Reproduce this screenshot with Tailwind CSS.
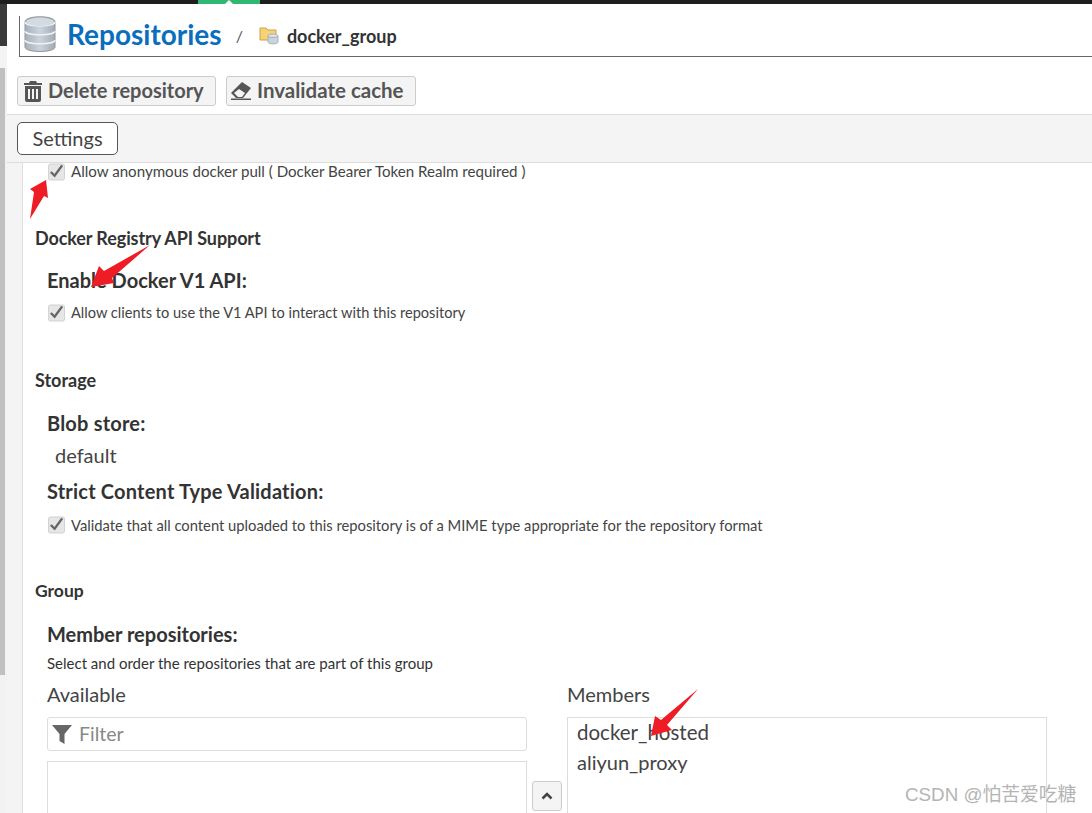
<!DOCTYPE html>
<html><head><meta charset="utf-8"><script src="https://cdn.jsdelivr.net/npm/@tailwindcss/browser@4"></script></head>
<body class="relative h-[813px] w-[1092px] overflow-hidden bg-white font-['Lato','Liberation_Sans',sans-serif] text-[#333]">
<div class="h-[4px] bg-[#1e1e1e] flex"><div class="ml-[198px] w-[62px] bg-[#2eb872] flex justify-center items-end"><div class="w-[8px] h-[4px] bg-white [clip-path:polygon(50%_0,100%_100%,0_100%)]"></div></div></div>
<div class="flex h-[809px]">
  <div class="w-[7px] flex flex-col bg-[#f2f2f2]">
    <div class="h-[42px] bg-[#3a3a3a]"></div>
    <div class="h-[22px] bg-[#f4f4f4]"></div>
    <div class="h-[607px] w-[5px] bg-[#c0c0c0]"></div>
  </div>
  <div class="flex-1 min-w-0 flex flex-col">
    <div class="h-[53px] pt-[12px] pl-[12px]">
      <div class="h-[41px] border-l border-b border-[#666] flex items-center pl-[4px] pb-[4px]">
        <svg class="w-[32px] h-[36px]" viewBox="0 0 32 36"><defs><linearGradient id="g" x1="0" x2="1" y1="0" y2="0"><stop offset="0" stop-color="#a7b0ba"/><stop offset=".5" stop-color="#cbd3dc"/><stop offset="1" stop-color="#a3acb6"/></linearGradient></defs><path d="M1 6c0-7 30-7 30 0v25c0 6-30 6-30 0z" fill="url(#g)" stroke="#8f959c"/><path d="M1 6c0 5 30 5 30 0M1 15c0 5 30 5 30 0M1 24c0 5 30 5 30 0" fill="none" stroke="#eef1f4" stroke-width="1.500"/><ellipse cx="16" cy="6" rx="14" ry="4" fill="#d3dae2"/></svg>
        <span class="ml-[11px] text-[28px] leading-none font-bold text-[#0a6ebd]">Repositories</span>
        <span class="ml-[14px] text-[16px] text-[#555] mt-[4px]">/</span>
        <svg class="ml-[16px] w-[20px] h-[20px] mt-[2px]" viewBox="0 0 20 20"><path d="M1 3h6l2 2h8v10H1z" fill="#f4d27a" stroke="#d2a23e"/><ellipse cx="14" cy="11" rx="5" ry="2" fill="#dfe4e9" stroke="#a9b2ba"/><path d="M9 11v6c0 2.500 10 2.500 10 0v-6c0 2-10 2-10 0z" fill="#cbd3da" stroke="#a9b2ba"/></svg>
        <span class="ml-[8px] text-[18px] font-bold text-[#333] mt-[4px]">docker_group</span>
      </div>
    </div>
    <div class="h-[57px] flex items-start gap-[10px] pl-[10px] pt-[19px]">
      <div class="h-[30px] w-[199px] flex items-center gap-[6px] pl-[6px] pb-[2px] rounded-[3px] border border-[#ccc] bg-[#f4f4f4] text-[#555] text-[20px] font-bold">
        <svg class="w-[18px] h-[21px] mt-[2px]" viewBox="0 0 18 21" fill="#555"><path d="M6 0h6l1 2h5v2H0V2h5zM1 5h16v14a2 2 0 0 1-2 2H3a2 2 0 0 1-2-2zm3 3v10h2V8zm4 0v10h2V8zm4 0v10h2V8z" fill-rule="evenodd"/></svg>Delete repository</div>
      <div class="h-[30px] w-[190px] flex items-center gap-[5px] pl-[4px] pb-[2px] rounded-[3px] border border-[#ccc] bg-[#f4f4f4] text-[#555] text-[20.500px] font-bold">
        <svg class="w-[21px] h-[18px] mt-[2px]" viewBox="0 0 21 18" fill="#555"><path d="M0 11 11 0l9 6-8 10H5z"/><path d="M3 11l4 4h4l3-4-6-4z" fill="#f4f4f4"/><path d="M0 16.500h20v1.500H0z"/></svg>Invalidate cache</div>
    </div>
    <div class="h-[49px] border-y border-[#ddd] bg-[#f4f4f4] pl-[10px] pt-[7px]">
      <div class="w-[101px] h-[33px] pb-[2px] rounded-[5px] border border-[#555] bg-white flex items-center justify-center text-[20px] text-[#444]">Settings</div>
    </div>
    <div class="flex-1 flex min-h-0">
      <div class="w-[16px] bg-[#f4f4f4] border-r border-[#ddd]"></div>
      <div class="flex-1 relative">
        <div class="pl-[12px]">
          <div class="pl-[13px] h-[18px] flex items-center gap-[6px] text-[15.100px] text-[#444]"><svg class="w-[17px] h-[18px]" viewBox="0 0 18 18"><rect x=".5" y=".5" width="17" height="17" rx="2" fill="#e6e6e6" stroke="#d0d0d0"/><path d="M3 9l4 4 8-11" fill="none" stroke="#666" stroke-width="2.500"/></svg><span class="-mt-[1px]">Allow anonymous docker pull ( Docker Bearer Token Realm required )</span></div>
          <div class="mt-[47px] text-[18px] tracking-[-0.1px] font-bold leading-[20px]">Docker Registry API Support</div>
          <div class="mt-[20px] pl-[12px] text-[20px] font-bold leading-[24px]">Enable Docker V1 API:</div>
          <div class="mt-[12px] pl-[13px] h-[18px] flex items-center gap-[6px] text-[14.600px] text-[#444]"><svg class="w-[17px] h-[18px]" viewBox="0 0 18 18"><rect x=".5" y=".5" width="17" height="17" rx="2" fill="#e6e6e6" stroke="#d0d0d0"/><path d="M3 9l4 4 8-11" fill="none" stroke="#666" stroke-width="2.500"/></svg>Allow clients to use the V1 API to interact with this repository</div>
          <div class="mt-[48px] text-[18px] font-bold leading-[20px]">Storage</div>
          <div class="mt-[21px] pl-[12px] text-[20px] tracking-[0.2px] font-bold leading-[24px]">Blob store:</div>
          <div class="mt-[8px] pl-[20px] text-[20px] leading-[24px] text-[#444]">default</div>
          <div class="mt-[12px] pl-[12px] text-[20px] tracking-[0.2px] font-bold leading-[24px]">Strict Content Type Validation:</div>
          <div class="mt-[13px] pl-[13px] h-[18px] flex items-center gap-[6px] text-[14.750px] text-[#444]"><svg class="w-[17px] h-[18px]" viewBox="0 0 18 18"><rect x=".5" y=".5" width="17" height="17" rx="2" fill="#e6e6e6" stroke="#d0d0d0"/><path d="M3 9l4 4 8-11" fill="none" stroke="#666" stroke-width="2.500"/></svg>Validate that all content uploaded to this repository is of a MIME type appropriate for the repository format</div>
          <div class="mt-[47px] text-[17.500px] font-bold leading-[20px]">Group</div>
          <div class="mt-[21px] pl-[12px] text-[20px] font-bold leading-[24px]">Member repositories:</div>
          <div class="mt-[7px] pl-[12px] text-[15px] leading-[20px]">Select and order the repositories that are part of this group</div>
          <div class="mt-[10px] pl-[12px] flex">
            <div class="w-[480px]">
              <div class="-mt-[1px] pb-[1px] text-[20px] leading-[24px] text-[#444]">Available</div>
              <div class="mt-[10px] h-[34px] rounded-[3px] border border-[#ddd] flex items-center pl-[4px] gap-[7px] text-[19.500px] text-[#888]"><svg class="w-[20px] h-[20px]" viewBox="0 0 20 20" fill="#666"><path d="M0 1h20l-7.500 9v10l-5-3v-7z"/></svg>Filter</div>
              <div class="mt-[10px] h-[60px] border border-[#ddd]"></div>
            </div>
            <div class="w-[40px] pt-[98px] pl-[5px]"><div class="w-[30px] h-[30px] rounded-[3px] border border-[#ccc] bg-[#f4f4f4] flex items-center justify-center"><svg class="w-[12px] h-[8px]" viewBox="0 0 12 8"><path d="M1.500 6.500 6 2l4.500 4.500" fill="none" stroke="#444" stroke-width="2.500"/></svg></div></div>
            <div class="w-[480px]">
              <div class="-mt-[1px] pb-[1px] text-[20px] leading-[24px] text-[#444]">Members</div>
              <div class="mt-[10px] h-[120px] border border-[#ddd] pl-[9px] text-[20.500px] leading-[30px] text-[#444]"><div class="-mt-[1px]">docker_hosted</div><div class="text-[20px]">aliyun_proxy</div></div>
            </div>
          </div>
        </div>
      </div>
    </div>
  </div>
</div>
<svg class="absolute left-0 top-0 w-[1092px] h-[813px] pointer-events-none" viewBox="0 0 1092 813" fill="#ee1c25">
  <path d="M30 219 34 192 30 189 46 180 48 198 44 196z"/>
  <path d="M150 245 112 278 114 283 91 287 99 266 104 271z"/>
  <path d="M698 689 667 725 672 730 651 736 655 716 661 720z"/>
</svg>
<div class="absolute left-[905px] top-[783px] text-[18.800px] leading-[24px] text-[#b4b4b4] font-['Liberation_Sans','Noto_Sans_CJK_SC',sans-serif]">CSDN @怕苦爱吃糖</div>
</body></html>
